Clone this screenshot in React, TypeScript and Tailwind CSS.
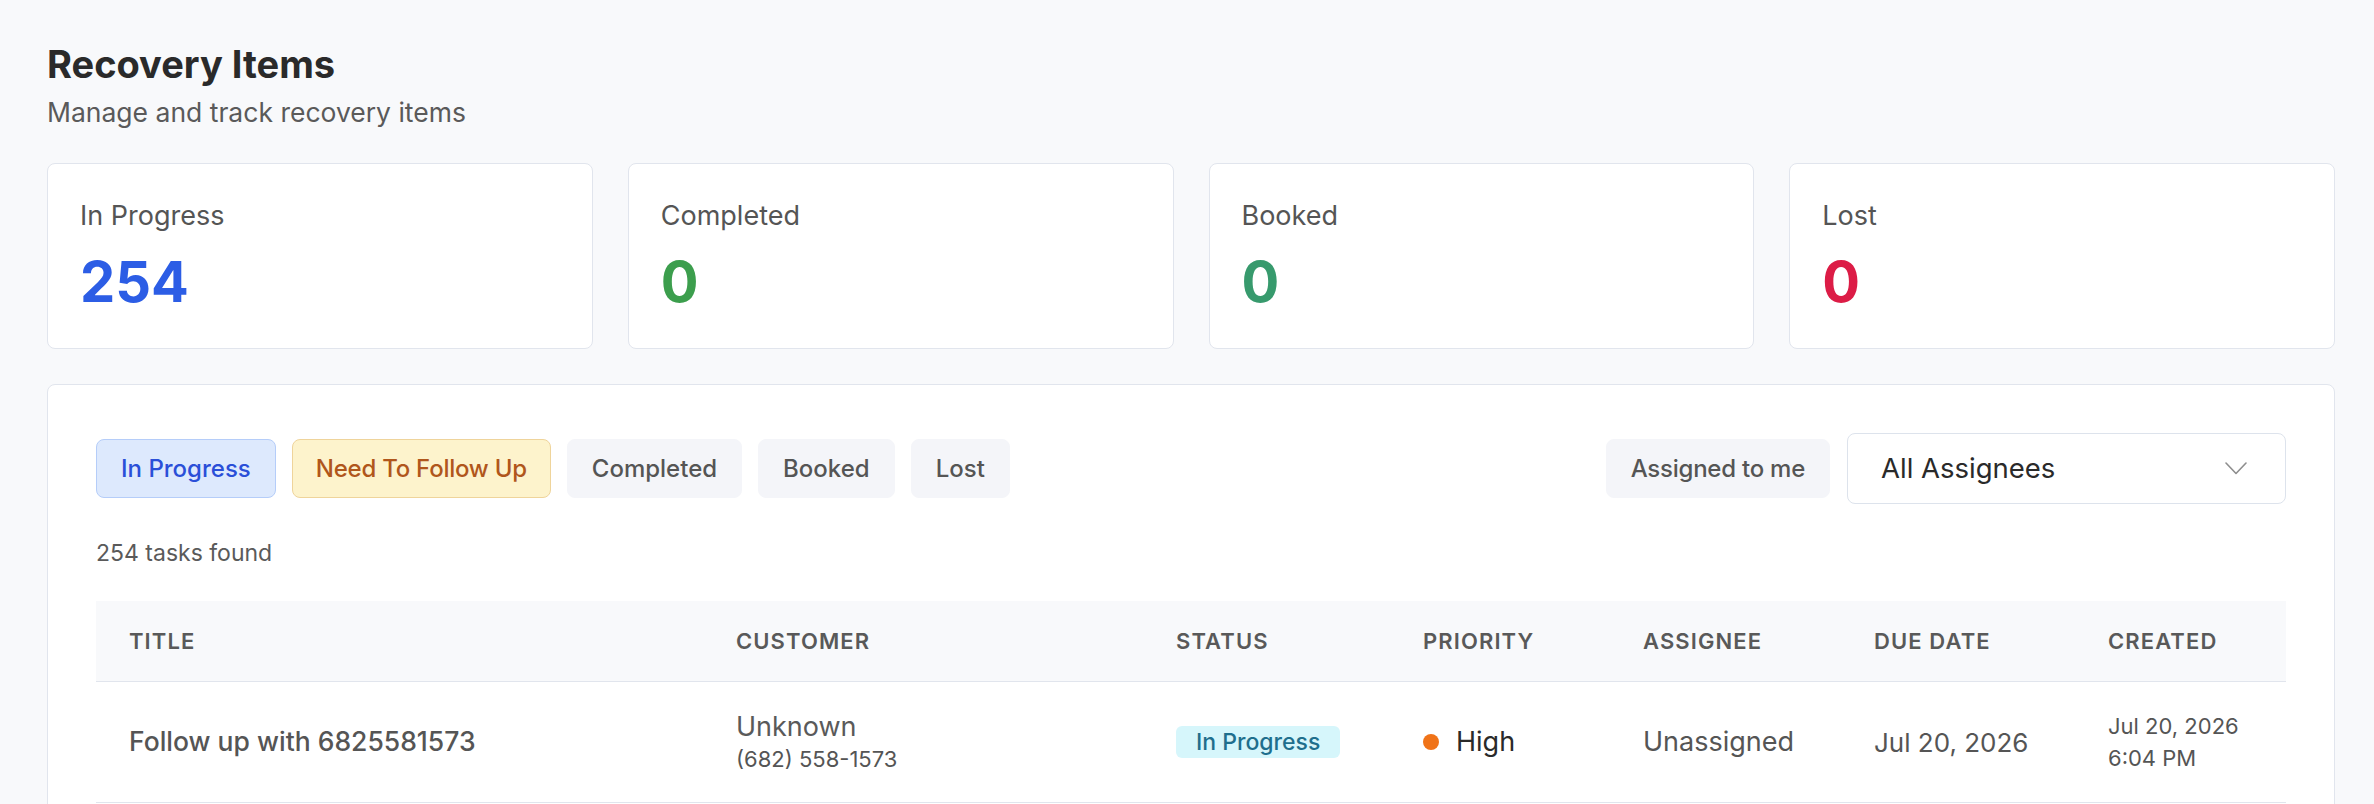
import React from "react";

const stats = [
  { label: "In Progress", value: "254", color: "text-[#2c5de5]" },
  { label: "Completed", value: "0", color: "text-[#3c9e4d]" },
  { label: "Booked", value: "0", color: "text-[#379a6d]" },
  { label: "Lost", value: "0", color: "text-[#dc1c46]" },
];

const cols = "grid grid-cols-[607px_440px_247px_220px_231px_234px_211px]";

const grayBtn =
  "h-[59px] rounded-[8px] border-[1.5px] border-[#f4f5f9] bg-[#f4f5f9] px-[24px] text-[24px] font-medium text-[#555555]";

export default function App() {
  return (
    <div
      className="min-h-screen w-full bg-[#f8f9fb] pl-[47px] pr-[39px] pt-[41px] text-[#555555]"
      style={{ fontFamily: "Inter, 'Noto Sans', sans-serif" }}
    >
      <h1 className="text-[38px] leading-[46px] font-bold text-[#2a2a2a]">Recovery Items</h1>
      <p className="mt-[8px] text-[26.5px] leading-[34px] text-[#5a5a5a]">Manage and track recovery items</p>

      <div className="mt-[34px] grid grid-cols-4 gap-[35px]">
        {stats.map((s) => (
          <div key={s.label} className="h-[186px] rounded-[8px] border border-[#e1e5ed] bg-white px-[32px] pt-[35px]">
            <div className="text-[27px] leading-[34px] text-[#555555]">{s.label}</div>
            <div className={`mt-[17px] text-[56px] leading-[64px] font-bold ${s.color}`}>{s.value}</div>
          </div>
        ))}
      </div>

      <div className="mt-[35px] rounded-[8px] border border-[#e1e5ed] bg-white px-[48px] pt-[48px] pb-[48px]">
        <div className="flex h-[71px] items-center justify-between">
          <div className="flex items-center gap-[16px]">
            <button className="h-[59px] rounded-[8px] border-[1.5px] border-[#b5cdf9] bg-[#dde9fd] px-[24px] text-[24px] font-medium text-[#2a4fd8]">
              In Progress
            </button>
            <button className="h-[59px] rounded-[8px] border-[1.5px] border-[#efd49b] bg-[#fdf3cc] px-[23px] text-[24px] font-medium tracking-[-0.01em] text-[#b0561b]">
              Need To Follow Up
            </button>
            <button className={grayBtn}>Completed</button>
            <button className={grayBtn}>Booked</button>
            <button className={grayBtn}>Lost</button>
          </div>
          <div className="flex items-center gap-[17px]">
            <button className={`${grayBtn} tracking-[-0.01em]`}>Assigned to me</button>
            <div className="flex h-[71px] w-[439px] items-center justify-between rounded-[8px] border-[1.5px] border-[#dde3ec] bg-white pl-[33px] pr-[38px]">
              <span className="text-[27.5px] text-[#2a2a2a]">All Assignees</span>
              <svg width="22" height="13" viewBox="0 0 22 13" fill="none">
                <polyline points="1,1 11,11.5 21,1" stroke="#8e8e8e" strokeWidth="1.6" strokeLinecap="round" strokeLinejoin="round" />
              </svg>
            </div>
          </div>
        </div>

        <div className="mt-[33px] text-[23px] leading-[32px] text-[#5a5a5a]">254 tasks found</div>

        <div className="mt-[32px]">
          <div className={`${cols} h-[81px] items-center border-b-[1.5px] border-[#e1e5ed] bg-[#f8f9fb] text-[22px] font-semibold uppercase tracking-[0.05em] text-[#595959]`}>
            <div className="pl-[33px]">Title</div>
            <div className="pl-[33px]">Customer</div>
            <div className="pl-[33px]">Status</div>
            <div className="pl-[33px]">Priority</div>
            <div className="pl-[33px]">Assignee</div>
            <div className="pl-[33px]">Due Date</div>
            <div className="pl-[33px]">Created</div>
          </div>
          <div className={`${cols} h-[121px] items-center border-b-[1.5px] border-[#e1e5ed]`}>
            <div className="pl-[33px] text-[26.5px] font-medium text-[#555555]">Follow up with 6825581573</div>
            <div className="pl-[33px]">
              <div className="text-[27px] leading-[34px] text-[#5a5a5a]">Unknown</div>
              <div className="text-[22px] leading-[30px] text-[#555555]">(682) 558-1573</div>
            </div>
            <div className="pl-[33px]">
              <span className="inline-flex h-[32px] items-center rounded-[6px] bg-[#d6f6fb] px-[20px] text-[23px] font-medium text-[#1f6f8d]">
                In Progress
              </span>
            </div>
            <div className="flex items-center gap-[17px] pl-[33px]">
              <span className="h-[16px] w-[16px] rounded-full bg-[#f07318]" />
              <span className="text-[27px] text-[#2a2a2a]">High</span>
            </div>
            <div className="pl-[33px] text-[27px] text-[#555555]">Unassigned</div>
            <div className="pl-[33px] text-[26px] text-[#555555]">Jul 20, 2026</div>
            <div className="pl-[33px] text-[22px] leading-[32px] text-[#555555]">
              <div>Jul 20, 2026</div>
              <div>6:04 PM</div>
            </div>
          </div>
        </div>
      </div>
    </div>
  );
}
